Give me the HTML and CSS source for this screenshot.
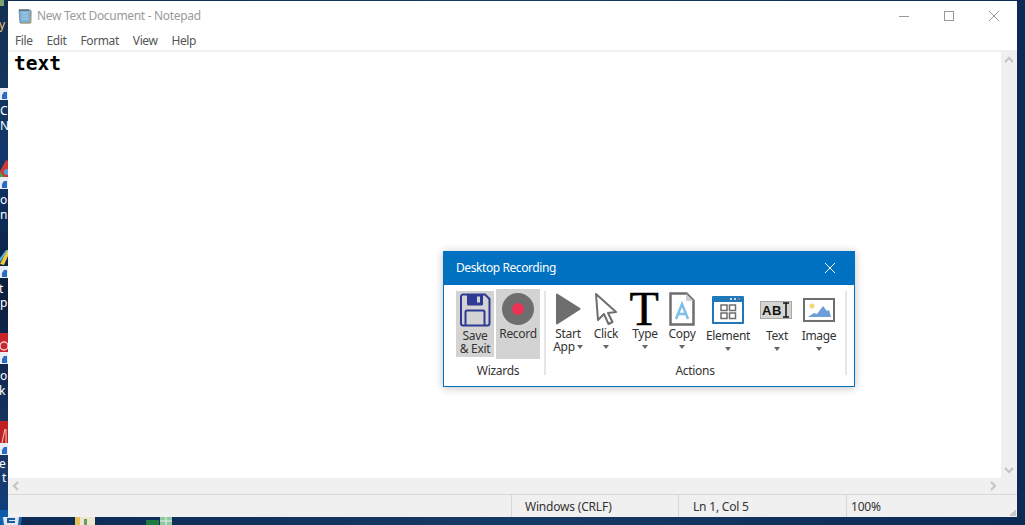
FILE: index.html
```html
<!DOCTYPE html>
<html lang="en">
<head>
    <meta charset="UTF-8">
    <title>New Text Document - Notepad</title>
    <link rel="stylesheet" href="styles.css">
</head>
<body>
    <!-- bits of the desktop showing to the left of the window -->
    <svg class="desktop-left" width="8" height="525" viewBox="0 0 8 525">
        <rect x="0" y="0" width="4" height="6" fill="#7fa36a"/>
        <text class="desk-text desk-orange" x="-1" y="29">y</text>
        <rect x="0" y="88" width="8" height="12" fill="#e8edf5"/>
        <path d="M2 99v-4l2-3h3v7z" fill="#2a6cc0"/>
        <text class="desk-text" x="0" y="115">C</text>
        <text class="desk-text" x="0" y="130">N</text>
        <path d="M0 171l6-11 2 1v16h-8z" fill="#cc3b32"/>
        <path d="M0 171l4 6h-4z" fill="#4a9a50"/>
        <circle cx="7" cy="172" r="3" fill="#5b9be0"/>
        <rect x="0" y="177" width="8" height="12" fill="#e8edf5"/>
        <path d="M2 188v-4l2-3h3v7z" fill="#2a6cc0"/>
        <text class="desk-text" x="0" y="204">o</text>
        <text class="desk-text" x="0" y="219">n</text>
        <path d="M0 264l7-14h1v6l-4 9z" fill="#f0c93a"/>
        <path d="M0 258l6-8h2l-8 12z" fill="#58b4e8"/>
        <rect x="0" y="266" width="8" height="12" fill="#e8edf5"/>
        <path d="M2 277v-4l2-3h3v7z" fill="#2a6cc0"/>
        <text class="desk-text" x="-1" y="293">t</text>
        <text class="desk-text" x="0" y="307">p</text>
        <rect x="0" y="333" width="8" height="19" fill="#c8242b"/>
        <circle cx="4" cy="346" r="4" fill="none" stroke="#f4c8c8" stroke-width="1.5"/>
        <rect x="0" y="352" width="8" height="12" fill="#e8edf5"/>
        <path d="M2 363v-4l2-3h3v7z" fill="#2a6cc0"/>
        <text class="desk-text" x="0" y="380">o</text>
        <text class="desk-text" x="-1" y="395">k</text>
        <rect x="0" y="421" width="8" height="22" fill="#c0201f"/>
        <path d="M2 443l3-14M6 443v-14" stroke="#f0d0d0" stroke-width="1"/>
        <rect x="0" y="443" width="8" height="12" fill="#e8edf5"/>
        <path d="M2 454v-4l2-3h3v7z" fill="#2a6cc0"/>
        <text class="desk-text" x="-1" y="468">e</text>
        <text class="desk-text" x="2" y="482">t</text>
        <rect x="0" y="510" width="8" height="15" fill="#0a5aa8"/>
    </svg>

    <!-- icons along the bottom edge -->
    <svg class="desktop-bottom" width="200" height="8" viewBox="0 0 200 8">
        <path d="M0 0h22l-1 8h-20z" fill="#1766ad"/>
        <path d="M3 0h16l-1 8h-14z" fill="#dfe8f0"/>
        <path d="M7 1h8v2h-6v1h6v2h-8z" fill="#1b5a9c"/>
        <rect x="75" y="0" width="20" height="8" fill="#ece6cc"/>
        <rect x="75" y="0" width="5" height="8" fill="#e6c25a"/>
        <rect x="84" y="2" width="3" height="6" fill="#6b9a6a"/>
        <rect x="146" y="3" width="13" height="5" fill="#1f7a3f"/>
        <rect x="160" y="0" width="12" height="8" fill="#8fc7a0"/>
        <path d="M166 0v8M160 4h12" stroke="#e8f2ea"/>
    </svg>

    <div class="notepad">
        <div class="titlebar">
            <svg class="app-icon" width="16" height="16" viewBox="0 0 16 16">
                <path d="M2 2h11l1 1-1 12H3z" fill="#7fb4d8" stroke="#55708a" stroke-width=".7"/>
                <path d="M5 5h6M5 8h6M5 11h6" stroke="#a8d0e8"/>
                <path d="M3 1v2M5 1v2M7 1v2M9 1v2M11 1v2" stroke="#44525e"/>
                <path d="M14 3v12H4" fill="none" stroke="#b09a70"/>
            </svg>
            <span class="title-text">New Text Document - Notepad</span>
            <div class="win-buttons">
                <svg width="12" height="12" viewBox="0 0 12 12"><path d="M1 6.5h10" stroke="#999"/></svg>
                <svg width="12" height="12" viewBox="0 0 12 12"><rect x="1.5" y="1.5" width="9" height="9" fill="none" stroke="#999"/></svg>
                <svg width="12" height="12" viewBox="0 0 12 12"><path d="M1 1l10 10M11 1L1 11" stroke="#999"/></svg>
            </div>
        </div>
        <div class="menubar">
            <span>File</span>
            <span>Edit</span>
            <span>Format</span>
            <span>View</span>
            <span>Help</span>
        </div>
        <div class="edit-row">
            <div class="edit-area">text</div>
            <div class="vscroll">
                <svg width="16" height="16" viewBox="0 0 16 16"><path d="M4 10l4-4 4 4" fill="none" stroke="#c4c4c4" stroke-width="2"/></svg>
                <svg width="16" height="16" viewBox="0 0 16 16"><path d="M4 6l4 4 4-4" fill="none" stroke="#c4c4c4" stroke-width="2"/></svg>
            </div>
        </div>
        <div class="hscroll">
            <svg width="16" height="16" viewBox="0 0 16 16"><path d="M10 4l-4 4 4 4" fill="none" stroke="#c4c4c4" stroke-width="2"/></svg>
            <svg width="16" height="16" viewBox="0 0 16 16"><path d="M6 4l4 4-4 4" fill="none" stroke="#c4c4c4" stroke-width="2"/></svg>
        </div>
        <div class="statusbar">
            <div class="status-cell status-enc">Windows (CRLF)</div>
            <div class="status-cell status-pos">Ln 1, Col 5</div>
            <div class="status-cell status-zoom">100%</div>
            <svg class="grip" width="8" height="8" viewBox="0 0 8 8">
                <path d="M5 1h2v2H5zM3 3h2v2H3zM5 3h2v2H5zM1 5h2v2H1zM3 5h2v2H3zM5 5h2v2H5z" fill="#c8c8c8"/>
            </svg>
        </div>
    </div>

    <div class="recorder">
        <div class="recorder-head">
            <span>Desktop Recording</span>
            <svg width="12" height="12" viewBox="0 0 12 12"><path d="M1 1l10 10M11 1L1 11" stroke="#fff"/></svg>
        </div>
        <div class="ribbon">
            <div class="group group-wizards">
                <div class="group-row wizard-row">
                    <div class="wizard wizard-save">
                        <svg width="32" height="34" viewBox="0 0 32 34">
                            <path d="M2 3.500a2 2 0 0 1 2-2h22l4.500 4.500v24.500a2 2 0 0 1-2 2h-24.500a2 2 0 0 1-2-2z" fill="none" stroke="#2f3a94" stroke-width="2"/>
                            <path d="M8 2h16v9a1.500 1.500 0 0 1-1.500 1.500h-13a1.500 1.500 0 0 1-1.500-1.500z" fill="#2f3a94"/>
                            <rect x="18" y="3.500" width="3" height="6" fill="#d3d3d3"/>
                            <path d="M6.500 32v-13a1.500 1.500 0 0 1 1.500-1.500h16a1.500 1.500 0 0 1 1.500 1.500v13" fill="none" stroke="#2f3a94" stroke-width="2"/>
                        </svg>
                        <span>Save<br>&amp; Exit</span>
                    </div>
                    <div class="wizard wizard-record">
                        <svg width="34" height="34" viewBox="0 0 34 34">
                            <circle cx="17" cy="17" r="16" fill="#6e6e6e"/>
                            <circle cx="17" cy="17" r="6" fill="#ee3356"/>
                        </svg>
                        <span>Record</span>
                    </div>
                </div>
                <div class="group-label">Wizards</div>
            </div>
            <div class="separator"></div>
            <div class="group group-actions">
                <div class="group-row">
                    <div class="tool tool-start">
                        <svg class="tool-icon" width="26" height="34" viewBox="0 0 26 34">
                            <path d="M1 2.500a1 1 0 0 1 1.500-.8l22.500 14.300a1 1 0 0 1 0 1.700l-22.500 14.600a1 1 0 0 1-1.500-.8z" fill="#6e6e6e"/>
                        </svg>
                        <span>Start<br>App<i class="caret caret-inline"></i></span>
                    </div>
                    <div class="tool tool-click">
                        <svg class="tool-icon" width="24" height="34" viewBox="0 0 24 34">
                            <path d="M2 2l20 18-8 1 4.500 9-4 2-4.500-10-6 6z" fill="#fff" stroke="#6e6e6e" stroke-width="2" stroke-linejoin="round"/>
                        </svg>
                        <span>Click</span>
                        <i class="caret"></i>
                    </div>
                    <div class="tool tool-type">
                        <div class="type-glyph">T</div>
                        <span>Type</span>
                        <i class="caret"></i>
                    </div>
                    <div class="tool tool-copy">
                        <svg class="tool-icon" width="26" height="34" viewBox="0 0 26 34">
                            <path d="M1.500 1.500h16l7 7v24h-23z" fill="#fff" stroke="#6e6e6e" stroke-width="2.500"/>
                            <path d="M17 1.500v7.500h7.500z" fill="#cfcfcf"/>
                            <path d="M7 27l6-15 6 15M9 22h8" fill="none" stroke="#7dbfe8" stroke-width="2.500"/>
                        </svg>
                        <span>Copy</span>
                        <i class="caret"></i>
                    </div>
                    <div class="tool tool-element tool-low">
                        <svg class="tool-icon" width="32" height="28" viewBox="0 0 32 28">
                            <rect width="32" height="28" rx="1" fill="#1f78b8"/>
                            <rect x="2" y="6" width="28" height="20" fill="#fff"/>
                            <circle cx="19" cy="3" r="1" fill="#fff"/>
                            <circle cx="23" cy="3" r="1" fill="#fff"/>
                            <circle cx="27" cy="3" r="1" fill="#ee5a7a"/>
                            <path d="M9 9h6v5.500h-6zM17.500 9h6v5.500h-6zM9 17h6v5.500h-6zM17.500 17h6v5.500h-6z" fill="none" stroke="#6e6e6e" stroke-width="1.500"/>
                        </svg>
                        <span>Element</span>
                        <i class="caret"></i>
                    </div>
                    <div class="tool tool-text tool-low">
                        <div class="abi-box">
                            <span class="abi-text">AB</span>
                            <svg width="8" height="16" viewBox="0 0 8 16"><path d="M1 1h6M1 15h6M4 1v14" fill="none" stroke="#111" stroke-width="1.500"/></svg>
                        </div>
                        <span>Text</span>
                        <i class="caret"></i>
                    </div>
                    <div class="tool tool-image tool-low">
                        <svg class="tool-icon" width="32" height="24" viewBox="0 0 32 24">
                            <rect x="1" y="1" width="30" height="22" fill="#fff" stroke="#6e6e6e" stroke-width="2"/>
                            <circle cx="9" cy="8" r="2.500" fill="#f2d77a"/>
                            <path d="M5 19l6-4 3 1 6-8 4 5 2-1 2 7z" fill="#6e9ed8"/>
                        </svg>
                        <span>Image</span>
                        <i class="caret"></i>
                    </div>
                </div>
                <div class="group-label">Actions</div>
            </div>
            <div class="separator separator-end"></div>
        </div>
    </div>
</body>
</html>
```
FILE: styles.css
```css
/* Desktop behind the window */
body {
    margin: 0;
    width: 1025px;
    height: 525px;
    box-sizing: border-box;
    padding: 1px 8px 8px;
    overflow: hidden;
    position: relative;
    font-family: "Noto Sans", sans-serif;
    font-size: 12px;
    background: linear-gradient(90deg, #0d2a55, #163a66 50%, #0d2a55);
}
.desktop-left {
    position: absolute;
    left: 0;
    top: 0;
    background: linear-gradient(#14304f, #12376b 30%, #0b1d3d 55%, #1a3a6c 90%, #0a3f80);
}
.desk-text {
    font-family: "Noto Sans", sans-serif;
    font-size: 12px;
    fill: #fff;
}
.desk-orange {
    fill: #f0c080;
}
.desktop-bottom {
    position: absolute;
    left: 0;
    top: 517px;
}

/* Notepad window */
.notepad {
    height: 516px;
    display: flex;
    flex-direction: column;
    background: #fff;
}
.titlebar {
    height: 29px;
    display: flex;
    align-items: center;
    padding-left: 9px;
    flex-shrink: 0;
}
.app-icon {
    margin-right: 4px;
}
.title-text {
    color: #9a9a9a;
    letter-spacing: -0.32px;
}
.win-buttons {
    margin-left: auto;
    display: flex;
    gap: 33px;
    padding-right: 17px;
}
.menubar {
    height: 20px;
    display: flex;
    align-items: center;
    padding-left: 7px;
    gap: 14px;
    color: #555;
    flex-shrink: 0;
    letter-spacing: -0.4px;
    border-bottom: 2px solid #f0f0f0;
}
.edit-row {
    flex: 1;
    display: flex;
    min-height: 0;
}
.edit-area {
    flex: 1;
    padding: 1px 0 0 6px;
    font-family: "DejaVu Sans Mono", monospace;
    font-size: 19.500px;
    font-weight: bold;
    line-height: 22px;
    color: #000;
}
.vscroll {
    width: 16px;
    background: #f0f0f0;
    display: flex;
    flex-direction: column;
    justify-content: space-between;
}
.hscroll {
    height: 16px;
    flex-shrink: 0;
    background: #f0f0f0;
    display: flex;
    justify-content: space-between;
    padding-right: 16px;
}
.statusbar {
    height: 22px;
    flex-shrink: 0;
    display: flex;
    align-items: center;
    justify-content: flex-end;
    position: relative;
    background: #f0f0f0;
    border-top: 1px solid #d7d7d7;
    color: #333;
}
.status-cell {
    height: 100%;
    display: flex;
    align-items: center;
    border-left: 1px solid #d7d7d7;
    box-sizing: border-box;
    letter-spacing: -0.2px;
}
.status-enc {
    width: 167px;
    padding-left: 13px;
}
.status-pos {
    width: 168px;
    padding-left: 14px;
}
.status-zoom {
    width: 171px;
    padding-left: 4px;
}
.grip {
    position: absolute;
    right: 0;
    bottom: 0;
}

/* Desktop Recording dialog */
.recorder {
    position: absolute;
    left: 443px;
    top: 251px;
    width: 412px;
    height: 136px;
    box-sizing: border-box;
    background: #fff;
    border: 1px solid #0070c0;
    box-shadow: 0 1px 8px rgba(0, 0, 0, 0.25);
    color: #333;
}
.recorder-head {
    height: 33px;
    box-sizing: border-box;
    padding: 0 18px 2px 12px;
    background: #0070c0;
    color: #fff;
    display: flex;
    align-items: center;
    justify-content: space-between;
    letter-spacing: -0.42px;
}
.ribbon {
    display: flex;
    padding-left: 12px;
}
.group {
    display: flex;
    flex-direction: column;
}
.group-wizards {
    width: 84px;
}
.group-actions {
    width: 290px;
    margin-left: 4px;
}
.group-row {
    display: flex;
    height: 70px;
    margin-top: 4px;
}
.wizard-row {
    gap: 2px;
    align-items: center;
}
.group-label {
    text-align: center;
    margin-top: 3px;
    line-height: 18px;
    letter-spacing: -0.3px;
}
.separator {
    width: 2px;
    height: 84px;
    margin: 6px 0 0 4px;
    background: #e6e6e6;
}
.separator-end {
    margin-left: 5px;
}
.wizard {
    display: flex;
    flex-direction: column;
    align-items: center;
    background: #d3d3d3;
    box-sizing: border-box;
    text-align: center;
    line-height: 13px;
    letter-spacing: -0.3px;
}
.wizard-save {
    width: 38px;
    height: 66px;
    padding-top: 2px;
}
.wizard-save span {
    margin-top: 2px;
}
.wizard-record {
    width: 44px;
    height: 70px;
    padding-top: 3px;
}
.wizard-record span {
    margin-top: 1px;
}

/* Action buttons */
.tool {
    display: flex;
    flex-direction: column;
    align-items: center;
    height: 70px;
    padding-top: 3px;
    box-sizing: border-box;
    text-align: center;
    line-height: 13px;
    letter-spacing: -0.3px;
}
.tool-icon {
    flex-shrink: 0;
}
.tool span {
    display: block;
}
.tool > span {
    margin-top: 1px;
}
.tool-start {
    width: 36px;
}
.tool-click {
    width: 40px;
}
.tool-type {
    width: 38px;
}
.tool-copy {
    width: 36px;
}
.tool-element {
    width: 56px;
}
.tool-text {
    width: 42px;
}
.tool-image {
    width: 42px;
}
.tool-element .tool-icon {
    margin: 4px 0 4px;
}
.tool-image .tool-icon {
    margin: 6px 0 6px;
}
.type-glyph {
    height: 34px;
    margin-right: 2px;
    font-family: "Liberation Serif", serif;
    font-size: 48px;
    line-height: 34px;
    color: #000;
    -webkit-text-stroke: 0.5px #000;
}
.abi-box {
    width: 32px;
    height: 18px;
    margin: 9px 2px 9px 0;
    box-sizing: border-box;
    display: flex;
    align-items: center;
    justify-content: center;
    background: #d4d4d0;
    border: 1px solid #a8a8a8;
}
.tool .abi-text {
    font-family: "Liberation Sans", sans-serif;
    font-size: 13px;
    font-weight: bold;
    letter-spacing: 0.5px;
    color: #111;
}
.caret {
    display: block;
    width: 0;
    height: 0;
    margin-top: 5px;
    border-left: 3.500px solid transparent;
    border-right: 3.500px solid transparent;
    border-top: 4px solid #666;
}
.caret-inline {
    display: inline-block;
    margin: 0 0 2px 2px;
}
```
